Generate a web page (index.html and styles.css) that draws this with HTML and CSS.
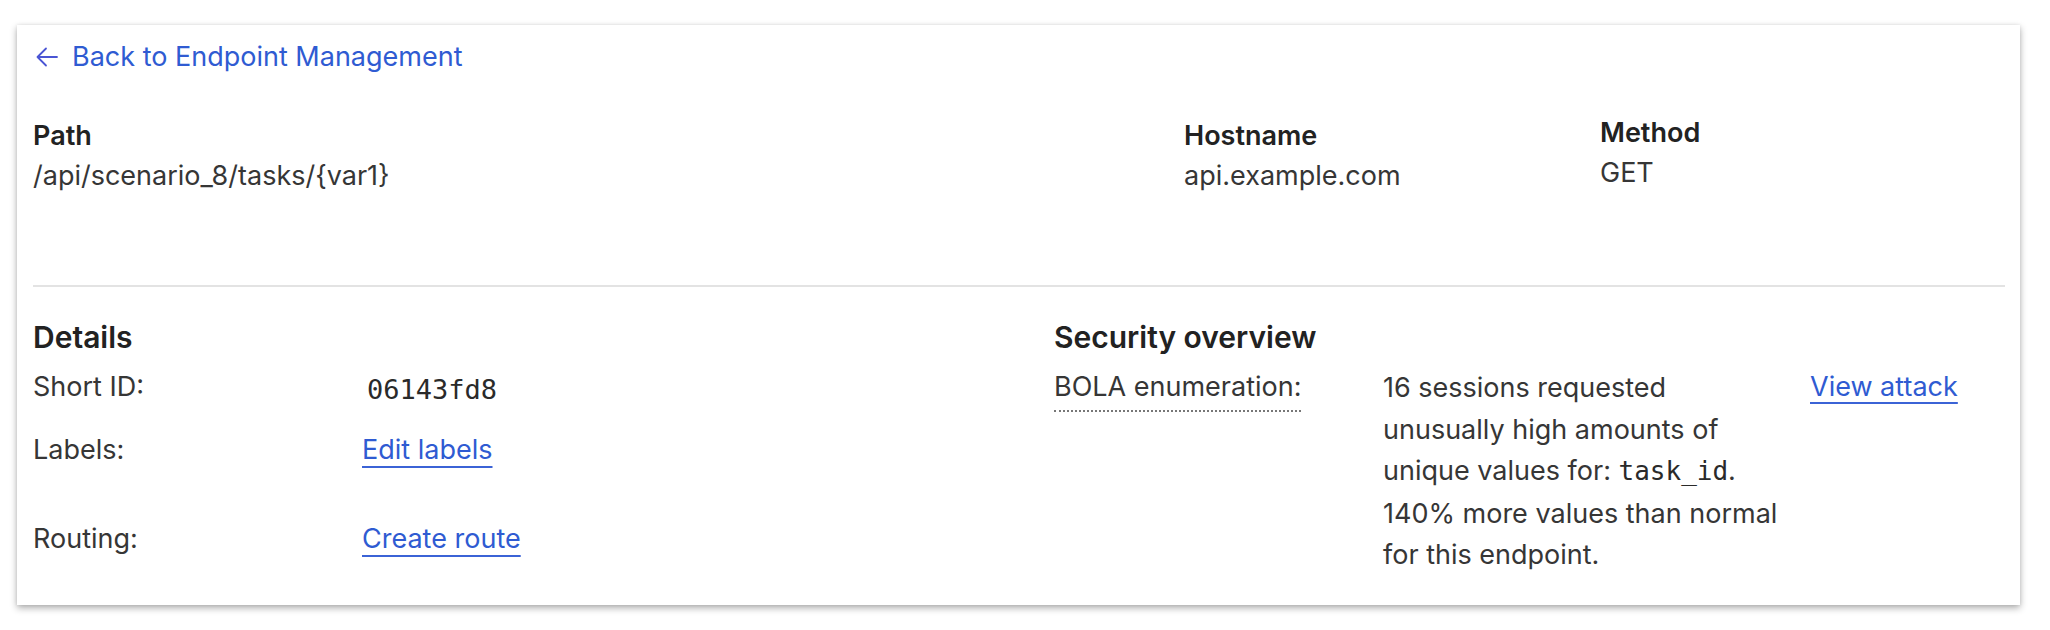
FILE: index.html
```html
<!DOCTYPE html>
<html lang="en">
<head>
<meta charset="utf-8">
<title>Endpoint</title>
<link rel="stylesheet" href="styles.css">
</head>
<body>
<div class="card">
  <a class="back" href="#">
    <svg class="back-icon" viewBox="0 0 24 24" width="24" height="24" aria-hidden="true"><path d="M22 12H2.5M11 3.5L2.5 12L11 20.5" fill="none" stroke="currentColor" stroke-width="1.8" stroke-linecap="round" stroke-linejoin="round"/></svg>
    <span>Back to Endpoint Management</span>
  </a>

  <div class="summary">
    <div class="field">
      <div class="field-label">Path</div>
      <div class="field-value">/api/scenario_8/tasks/{var1}</div>
    </div>
    <div class="field">
      <div class="field-label">Hostname</div>
      <div class="field-value">api.example.com</div>
    </div>
    <div class="field field-method">
      <div class="field-label">Method</div>
      <div class="field-value">GET</div>
    </div>
  </div>

  <div class="divider"></div>

  <div class="sections">
    <section class="details">
      <h2 class="section-title">Details</h2>
      <div class="row row-id">
        <span class="key">Short ID:</span>
        <code class="short-id">06143fd8</code>
      </div>
      <div class="row row-labels">
        <span class="key">Labels:</span>
        <a class="link" href="#">Edit labels</a>
      </div>
      <div class="row">
        <span class="key">Routing:</span>
        <a class="link" href="#">Create route</a>
      </div>
    </section>

    <section class="security">
      <h2 class="section-title">Security overview</h2>
      <div class="sec-row">
        <div class="sec-key"><span class="dotted">BOLA enumeration:</span></div>
        <p class="desc">16 sessions requested<br>unusually high amounts of<br>unique values for: <code class="inline-code">task_id</code>.<br>140% more values than normal<br>for this endpoint.</p>
        <div class="sec-action"><a class="link" href="#">View attack</a></div>
      </div>
    </section>
  </div>
</div>
</body>
</html>
```

FILE: styles.css
```css
* { box-sizing: border-box; }

html, body {
  margin: 0;
  padding: 0;
  background: #ffffff;
}

body {
  font-family: Inter, "Noto Sans", "Liberation Sans", sans-serif;
  font-size: 27px;
  line-height: 40px;
  color: #363636;
}

.card {
  margin: 25px 0 27px 17px;
  width: 2003px;
  padding: 12px 15px 29px 16px;
  background: #ffffff;
  box-shadow: 0 3px 7px rgba(0, 0, 0, 0.32), 0 0 3px rgba(0, 0, 0, 0.08);
}

.back {
  display: flex;
  align-items: center;
  gap: 13px;
  height: 40px;
  color: #2f5bd2;
  text-decoration: none;
  width: max-content;
}

.back-icon {
  margin-left: 2px;
  color: #4a55d4;
}

.summary {
  margin-top: 39px;
  display: grid;
  grid-template-columns: 1151px 416px auto;
}

.field-label {
  font-weight: 600;
  color: #222222;
}

.field-value {
  color: #363636;
}

.field-method {
  margin-top: -3px;
}

.divider {
  margin-top: 89px;
  height: 2px;
  background: #e3e3e3;
}

.sections {
  margin-top: 30px;
  display: grid;
  grid-template-columns: 1021px auto;
}

.section-title {
  margin: 0 0 10px 0;
  font-size: 30px;
  line-height: 40px;
  font-weight: 600;
  color: #222222;
}

.row {
  display: grid;
  grid-template-columns: 329px auto;
  align-items: start;
  min-height: 40px;
}

.row-id { min-height: 63px; }
.row-labels { min-height: 89px; }

.key {
  color: #363636;
}

.short-id {
  font-family: "DejaVu Sans Mono", "Liberation Mono", monospace;
  font-size: 27px;
  padding: 0 5px;
  color: #2a2a2a;
  line-height: 46px;
}

.link {
  justify-self: start;
  color: #2f5bd2;
  text-decoration: underline;
  text-decoration-color: #3b63d6;
  text-decoration-thickness: 2px;
  text-underline-offset: 7px;
}

.sec-row {
  display: grid;
  grid-template-columns: 329px 427px auto;
  align-items: start;
}

.dotted {
  display: inline-block;
  line-height: 40px;
  padding-bottom: 3px;
  border-bottom: 2px dotted #777777;
}

.desc {
  margin: 0;
  line-height: 41.5px;
  color: #363636;
}

.inline-code {
  font-family: "DejaVu Sans Mono", "Liberation Mono", monospace;
  font-size: 26px;
  color: #2a2a2a;
}

.sec-action .link {
  text-underline-offset: 6px;
}
```
